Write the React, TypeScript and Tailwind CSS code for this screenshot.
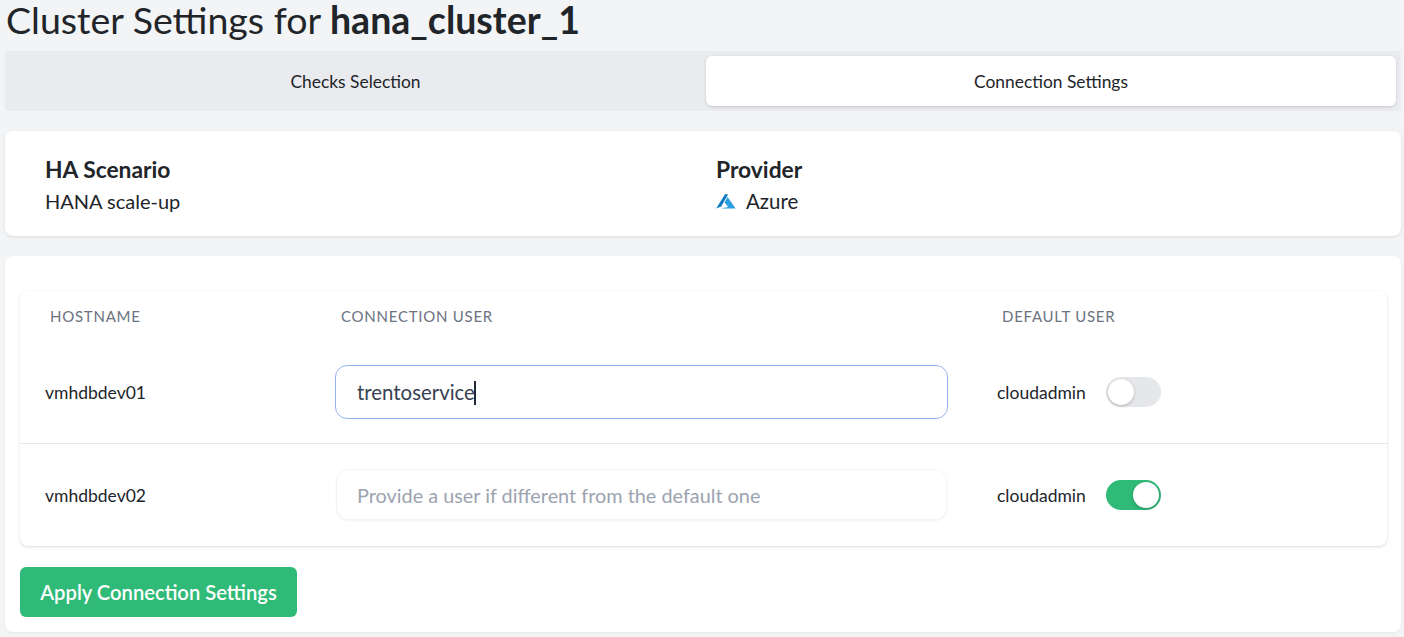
import React from "react";

function AzureIcon() {
  return (
    <svg width="20" height="15" viewBox="0 0 20 15" className="block">
      <path d="M9 0.2 L12.2 0.2 L5.2 12.6 L0.2 14.6 Z" fill="#0a78c4" />
      <path d="M11.6 3 L19.6 14.6 L4.8 14.6 L12.2 13 L8.6 8.6 Z" fill="#2a9fe0" />
    </svg>
  );
}

function Toggle({ on }: { on: boolean }) {
  return (
    <div className={on ? "w-[55px] h-[30px] rounded-full bg-[#30ba78] flex items-center justify-end p-[2px]" : "w-[55px] h-[30px] rounded-full bg-[#e5e7eb] flex items-center justify-start p-[2px]"}>
      <div className="w-[26px] h-[26px] rounded-full bg-white shadow-[0_1px_3px_rgba(0,0,0,0.25)]" />
    </div>
  );
}

function Row({ host, last, children, on }: { host: string; last?: boolean; children: React.ReactNode; on: boolean }) {
  return (
    <div className={last ? "flex items-center h-[102px]" : "flex items-center h-[99px] border-b border-[#e5e7eb] pb-[4px]"}>
      <div className="w-[315px] pl-[25px] pt-[2px] text-[#212529] text-[17.5px]">{host}</div>
      <div className="w-[662px] pr-[50px]">{children}</div>
      <div className="flex items-center gap-[20px] text-[#212529] text-[17.5px]">
        <span className="pt-[2px]">cloudadmin</span>
        <Toggle on={on} />
      </div>
    </div>
  );
}

export default function App() {
  return (
    <div className="bg-[#f3f4f6] h-[637px] overflow-hidden pl-[5px] pr-[3px] font-['Lato',sans-serif]">
      <h1 className="text-[37.5px] leading-[40px] pb-[2px] text-[#212529] pl-px">
        Cluster Settings for <span className="font-bold">hana_cluster_1</span>
      </h1>
      <div className="mt-[9px] h-[60px] bg-[#e9ebef] rounded-sm flex p-[5px]">
        <div className="w-[696px] pr-[5px] pt-[2px] flex items-center justify-center text-[#212529] text-[17.4px]">Checks Selection</div>
        <div className="flex-1 pt-[2px] bg-white rounded-md shadow-[0_1px_3px_rgba(0,0,0,0.15)] flex items-center justify-center text-[#212529] text-[17.4px]">Connection Settings</div>
      </div>
      <div className="mt-[20px] h-[105px] bg-white rounded-lg shadow-[0_1px_3px_rgba(0,0,0,0.1)] flex pl-[40px] pt-[23px]">
        <div className="w-[671px]">
          <div className="text-[22.8px] leading-[30px] font-bold text-[#212529]">HA Scenario</div>
          <div className="text-[20px] leading-[34px] text-[#212529]">HANA scale-up</div>
        </div>
        <div>
          <div className="text-[22.8px] leading-[30px] font-bold text-[#212529]">Provider</div>
          <div className="flex items-center gap-[10px] text-[20.4px] leading-[34px] text-[#212529]">
            <AzureIcon />
            <span>Azure</span>
          </div>
        </div>
      </div>
      <div className="mt-[20px] h-[376px] bg-white rounded-lg pt-[35px] px-[15px] shadow-[0_1px_3px_rgba(0,0,0,0.05)]">
        <div className="h-[255px] w-[1367px] rounded-lg shadow-[0_1px_3px_rgba(0,0,0,0.15)] overflow-hidden">
          <div className="flex h-[54px] pb-[3px] items-center text-[15px] tracking-[0.75px] text-[#6b7280]">
            <div className="w-[321px] pl-[30px]">HOSTNAME</div>
            <div className="w-[661px]">CONNECTION USER</div>
            <div>DEFAULT USER</div>
          </div>
          <Row host="vmhdbdev01" on={false}>
            <div className="h-[54px] w-[613px] rounded-xl border border-[#93b4f0] flex items-center pl-[21px] pt-px text-[20.4px] text-[#374151]">
              <span>trentoservice</span>
              <span className="w-[2px] h-[24px] bg-[#1f2937] -ml-px" />
            </div>
          </Row>
          <Row host="vmhdbdev02" last on={true}>
            <div className="ml-px -mt-px h-[51px] w-[611px] rounded-xl border border-[#f3f4f6] shadow-[0_1px_2px_rgba(0,0,0,0.05)] flex items-center pl-[20px] pt-[2px] text-[19.85px] text-[#9ca3af]">
              Provide a user if different from the default one
            </div>
          </Row>
        </div>
        <button className="block mt-[21px] h-[50px] w-[277px] rounded-md bg-[#30ba78] text-white text-[20.2px] font-semibold">
          Apply Connection Settings
        </button>
      </div>
    </div>
  );
}
